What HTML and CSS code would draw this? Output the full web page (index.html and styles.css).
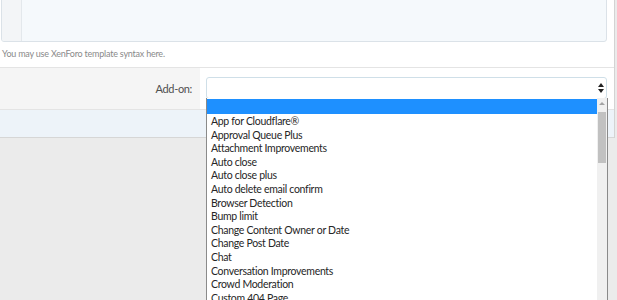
FILE: index.html
```html
<!DOCTYPE html>
<html lang="en">
<head>
    <meta charset="UTF-8">
    <meta name="viewport" content="width=device-width, initial-scale=1.0">
    <title>Edit template modification</title>
    <link rel="stylesheet" href="styles.css">
</head>
<body>
    <div class="block">
        <div class="editor-row">
            <div class="code-box">
                <div class="gutter"></div>
                <div class="code-area"></div>
            </div>
            <div class="hint">You may use XenForo template syntax here.</div>
        </div>
        <div class="form-row">
            <div class="form-label">Add-on:</div>
            <div class="form-control">
                <div class="select-box">
                    <svg class="select-arrows" width="6" height="10" viewBox="0 0 6 10">
                        <path d="M3 0 L6 4 L0 4 Z M0 6 L6 6 L3 10 Z" fill="#222"/>
                    </svg>
                </div>
            </div>
        </div>
        <div class="submit-row"></div>
    </div>

    <!-- open dropdown of the add-on select -->
    <div class="dropdown">
        <ul class="options">
            <li class="selected">&nbsp;</li>
            <li>App for Cloudflare®</li>
            <li>Approval Queue Plus</li>
            <li>Attachment Improvements</li>
            <li>Auto close</li>
            <li>Auto close plus</li>
            <li>Auto delete email confirm</li>
            <li>Browser Detection</li>
            <li>Bump limit</li>
            <li>Change Content Owner or Date</li>
            <li>Change Post Date</li>
            <li>Chat</li>
            <li>Conversation Improvements</li>
            <li>Crowd Moderation</li>
            <li>Custom 404 Page</li>
        </ul>
        <div class="scrollbar">
            <div class="scroll-up"></div>
            <div class="scroll-thumb"></div>
        </div>
    </div>
</body>
</html>
```

FILE: styles.css
```css
* {margin: 0; padding: 0; box-sizing: border-box;}
html, body {height: 100%; overflow: hidden;}
body {background-color: #ebebeb; font-family: 'Lato', 'Liberation Sans', sans-serif; color: #141414; position: relative;}
li {list-style-type: none;}

.block {width: 615px; background-color: #ffffff; border-right: 1px solid #d3d3d3;}

.editor-row {padding: 0 7px 6px 1px; border-bottom: 1px solid #e4e4e4;}
.editor-row .code-box {display: flex; height: 52px; margin-top: -10px; border: 1px solid #dbe2e8; border-radius: 3px; background-color: #f5f9fc; overflow: hidden;}
.editor-row .gutter {width: 20px; background-color: #f3f5f7; border-right: 1px solid #e3e8ec;}
.editor-row .code-area {flex: 1;}
.editor-row .hint {font-size: 9px; letter-spacing: -0.22px; color: #8a8a8a; padding: 5px 0 0 1px; line-height: 14px;}

.form-row {display: grid; grid-template-columns: 200px 1fr; height: 42px; border-bottom: 1px solid #e4e4e4;}
.form-row .form-label {background-color: #f5f5f5; display: flex; align-items: center; justify-content: flex-end; padding: 0 8px 1px 0; font-size: 11px; letter-spacing: -0.35px; color: #505050;}
.form-row .form-control {padding: 9px 7px 0 6px;}
.form-row .select-box {height: 22px; border: 1px solid #cfdfe8; border-radius: 3px; background-color: #ffffff; display: flex; align-items: center; justify-content: flex-end; padding-right: 2px;}

.submit-row {height: 28px; background-color: #edf3f9; border-bottom: 1px solid #d6d6d6;}

.dropdown {position: absolute; left: 206px; top: 98px; width: 402px; height: 240px; background-color: #ffffff; border: 1px solid #8a8a8a; border-top: none; display: flex;}
.dropdown .options {flex: 1; font-size: 10.5px; letter-spacing: -0.3px; line-height: 13.6px; color: #262626; padding-top: 0.5px;}
.dropdown .options li {padding-left: 4px; white-space: nowrap;}
.dropdown .options li.selected {background-color: #1e90ff; height: 15.5px; margin-bottom: 1px;}
.dropdown .scrollbar {width: 10px; background-color: #f0f0f0;}
.dropdown .scroll-up {height: 12px; position: relative;}
.dropdown .scroll-up::after {content: ''; position: absolute; left: 2px; top: 4px; border-left: 3px solid transparent; border-right: 3px solid transparent; border-bottom: 3px solid #a3a3a3;}
.dropdown .scroll-thumb {height: 51px; margin: 2px 1px 0; background-color: #c1c1c1;}
```
